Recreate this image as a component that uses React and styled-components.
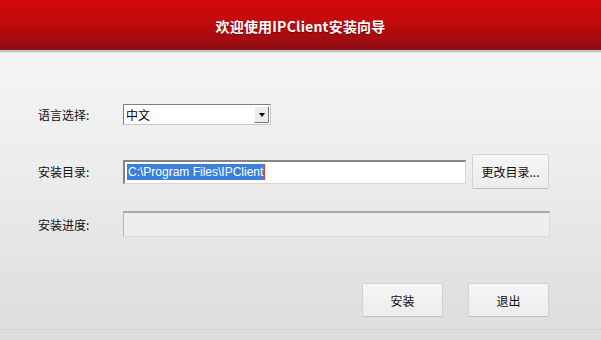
import React from 'react';
import styled, { createGlobalStyle } from 'styled-components';

const GlobalStyle = createGlobalStyle`
  html, body {
    margin: 0;
    padding: 0;
  }
  body {
    font-family: "Liberation Sans", "Noto Sans CJK SC", sans-serif;
    font-size: 12px;
    color: #000;
  }
`;

const Window = styled.div`
  width: 601px;
  height: 340px;
  display: flex;
  flex-direction: column;
  background: linear-gradient(to bottom, #f8f8f8 0%, #eeeeee 45%, #dcdcdc 100%);
  overflow: hidden;
`;

const Header = styled.div`
  height: 50px;
  display: flex;
  align-items: center;
  justify-content: center;
  background: linear-gradient(to bottom, #d4090b 0%, #c20a0d 45%, #8e0e13 100%);
  border-bottom: 2px solid #c4c4c4;
  box-shadow: 0 1px 0 #e2e2e2;
`;

const Title = styled.h1`
  margin: 0;
  padding-top: 2px;
  font-family: "Noto Sans CJK SC", "Liberation Sans", sans-serif;
  font-size: 14px;
  font-weight: 700;
  color: #fff;
  letter-spacing: 0.2px;
  text-shadow: 0 1px 1px rgba(60, 0, 0, 0.5);
`;

const Body = styled.div`
  flex: 1;
  display: flex;
  flex-direction: column;
  padding: 52px 51px 0 38px;
`;

const Row = styled.div`
  display: grid;
  grid-template-columns: 85px 1fr;
  align-items: center;
  height: ${(p) => p.$h}px;
  margin-bottom: ${(p) => p.$gap}px;
`;

const Label = styled.span`
  font-family: "Noto Sans CJK SC", sans-serif;
  font-size: 12px;
  color: #111;
`;

const Select = styled.div`
  width: 148px;
  height: 21px;
  box-sizing: border-box;
  display: flex;
  align-items: center;
  background: #fff;
  border: 1px solid #7f7f7f;
  border-right-color: #c9c9c9;
  border-bottom-color: #c9c9c9;
  padding: 0 1px 0 2px;
  font-family: "Noto Sans CJK SC", sans-serif;
`;

const SelectValue = styled.span`
  flex: 1;
`;

const DropButton = styled.span`
  width: 15px;
  height: 17px;
  box-sizing: border-box;
  display: flex;
  align-items: center;
  justify-content: center;
  background: #ececec;
  border: 1px solid;
  border-color: #fff #7a7a7a #7a7a7a #fff;
  &::after {
    content: '';
    border-left: 3.5px solid transparent;
    border-right: 3.5px solid transparent;
    border-top: 4px solid #000;
  }
`;

const PathLine = styled.div`
  display: flex;
  align-items: center;
  gap: 6px;
`;

const PathInput = styled.div`
  width: 343px;
  height: 24px;
  box-sizing: border-box;
  display: flex;
  align-items: center;
  background: #fff;
  border: 1px solid #d6d6d6;
  border-top: 2px solid #858585;
  border-left: 2px solid #858585;
  padding-left: 2px;
`;

const Selected = styled.span`
  background: #3b7fdc;
  color: #fff;
  font-size: 12px;
  line-height: 16px;
  padding: 0 1px;
  border-right: 1px solid #e04020;
`;

const Button = styled.button`
  width: ${(p) => p.$w}px;
  height: ${(p) => p.$h}px;
  box-sizing: border-box;
  font-family: "Noto Sans CJK SC", sans-serif;
  font-size: 12px;
  color: #111;
  background: linear-gradient(to bottom, #f6f6f6 0%, #ececec 100%);
  border: 1px solid #d2d2d2;
  border-bottom-color: #c2c2c2;
  border-radius: 2px;
  padding: 0;
  cursor: pointer;
`;

const Progress = styled.div`
  width: 427px;
  height: 26px;
  box-sizing: border-box;
  background: #eeeeee;
  border: 1px solid #dadada;
  border-top: 2px solid #a9a9a9;
  border-left: 1px solid #b8b8b8;
`;

const Footer = styled.div`
  display: flex;
  justify-content: flex-end;
  gap: 25px;
  padding-right: 1px;
`;

const Dotted = styled.div`
  margin-top: 12px;
  border-top: 1px dotted #c8c8c8;
  margin-right: -51px;
  margin-left: -38px;
`;

export default function App() {
  return (
    <>
      <GlobalStyle />
      <Window>
        <Header>
          <Title>欢迎使用IPClient安装向导</Title>
        </Header>
        <Body>
          <Row $h={21} $gap={29}>
            <Label>语言选择:</Label>
            <Select>
              <SelectValue>中文</SelectValue>
              <DropButton />
            </Select>
          </Row>
          <Row $h={35} $gap={22}>
            <Label>安装目录:</Label>
            <PathLine>
              <PathInput>
                <Selected>C:\Program Files\IPClient</Selected>
              </PathInput>
              <Button $w={77} $h={35}>更改目录...</Button>
            </PathLine>
          </Row>
          <Row $h={26} $gap={46}>
            <Label>安装进度:</Label>
            <Progress />
          </Row>
          <Footer>
            <Button $w={81} $h={34}>安装</Button>
            <Button $w={81} $h={34}>退出</Button>
          </Footer>
          <Dotted />
        </Body>
      </Window>
    </>
  );
}
